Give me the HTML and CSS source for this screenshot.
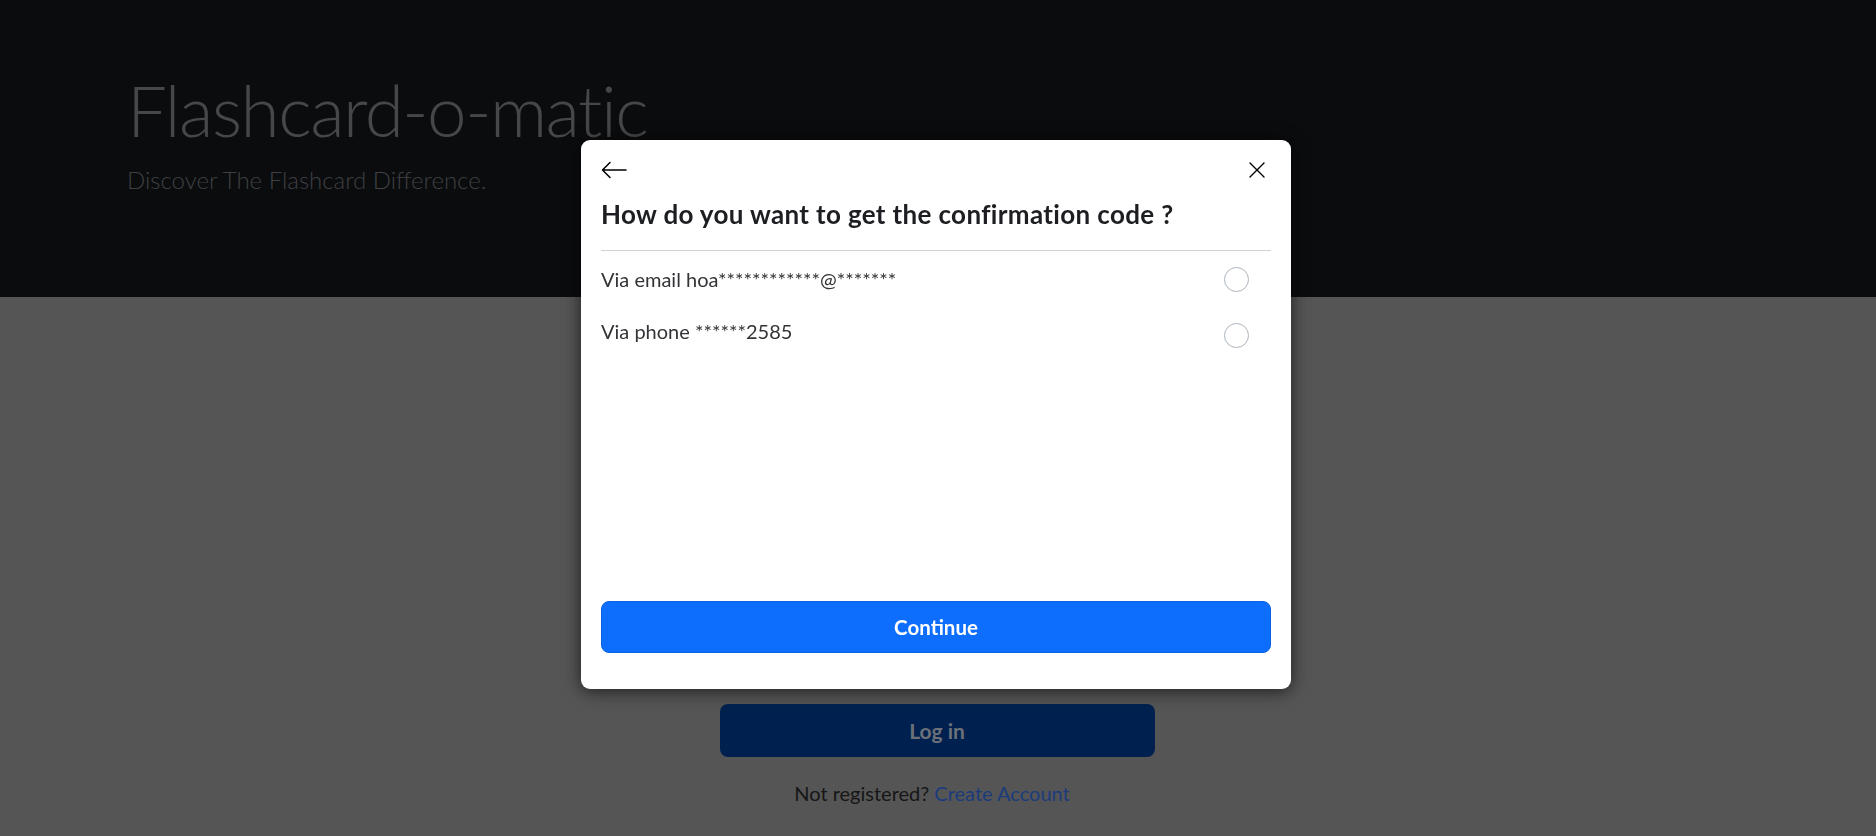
FILE: index.html
```html
<!DOCTYPE html>
<html lang="en">
<head>
<meta charset="utf-8">
<title>Flashcard-o-matic</title>
<link rel="stylesheet" href="styles.css">
</head>
<body>
<header class="hero">
  <h1 class="hero-title">Flashcard-o-matic</h1>
  <p class="hero-lead">Discover The Flashcard Difference.</p>
</header>
<main class="main">
  <form class="login">
    <button type="button" class="login-btn">Log in</button>
    <p class="register">Not registered? <a href="#" class="register-link">Create Account</a></p>
  </form>
</main>

<div class="overlay">
  <div class="modal">
    <div class="modal-top">
      <button type="button" class="icon-btn" aria-label="Back">
        <svg width="26" height="18" viewBox="0 0 26 18" fill="none" stroke="#000" stroke-width="1.5" stroke-linecap="round" stroke-linejoin="round"><path d="M25 9H1.5M9 1.5L1.5 9L9 16.5"/></svg>
      </button>
      <button type="button" class="icon-btn" aria-label="Close">
        <svg width="16" height="16" viewBox="0 0 16 16" fill="none" stroke="#000" stroke-width="1.4" stroke-linecap="round"><path d="M1 1L15 15M15 1L1 15"/></svg>
      </button>
    </div>
    <h2 class="modal-title">How do you want to get the confirmation code ?</h2>
    <div class="modal-body">
      <label class="option">
        <span class="option-text">Via email hoa************@*******</span>
        <span class="radio"></span>
      </label>
      <label class="option">
        <span class="option-text option-text-raised">Via phone ******2585</span>
        <span class="radio"></span>
      </label>
    </div>
    <div class="modal-footer">
      <button type="button" class="continue-btn">Continue</button>
    </div>
  </div>
</div>
</body>
</html>
```
FILE: styles.css
```css
* { box-sizing: border-box; }
html, body { margin: 0; padding: 0; }
body {
  font-family: "Lato", "Open Sans", "Liberation Sans", sans-serif;
  background: #555555;
  height: 836px;
  overflow: hidden;
}
.hero {
  background: #0b0c0e;
  height: 297px;
  padding: 67px 0 0 127px;
}
.hero-title {
  margin: 0;
  font-weight: 300;
  font-size: 71px;
  letter-spacing: -1.5px;
  line-height: 1.2;
  color: #46474a;
}
.hero-lead {
  margin: 11px 0 0;
  font-weight: 300;
  font-size: 24px;
  line-height: 1.45;
  color: #3f4043;
}
.main {
  padding-top: 407px;
}
.login {
  width: 435px;
  margin: 0 auto;
  transform: translateX(-1px);
}
.login-btn {
  display: block;
  width: 100%;
  height: 53px;
  border: none;
  border-radius: 8px;
  background: #00214f;
  color: #6c7179;
  font-family: inherit;
  font-weight: 700;
  font-size: 21px;
}
.register {
  margin: 21px 0 0;
  text-align: center;
  font-size: 20px;
  line-height: 1.5;
  color: #161617;
  transform: translateX(-5px);
}
.register-link {
  color: #1b3b7c;
  text-decoration: none;
}
.overlay {
  position: fixed;
  inset: 0;
  display: flex;
  justify-content: center;
  align-items: flex-start;
  padding: 140px 4px 0 0;
}
.modal {
  width: 710px;
  height: 549px;
  background: #fff;
  border-radius: 9px;
  box-shadow: 0 2px 18px rgba(0,0,0,0.65);
  padding: 18px 20px 36px;
  display: flex;
  flex-direction: column;
}
.modal-top {
  display: flex;
  justify-content: space-between;
  align-items: center;
  height: 24px;
}
.icon-btn {
  background: none;
  border: none;
  padding: 0;
  display: flex;
  align-items: center;
  cursor: pointer;
}
.icon-btn:last-child { margin-right: 6px; }
.modal-title {
  margin: 17px 0 0;
  padding-bottom: 20px;
  border-bottom: 1px solid #cfd1d4;
  font-size: 26px;
  letter-spacing: 0.35px;
  font-weight: 700;
  line-height: 1.2;
  color: #1c1e21;
}
.modal-body {
  flex: 1;
  display: flex;
  flex-direction: column;
  gap: 16px;
  padding-top: 8px;
}
.option {
  display: flex;
  justify-content: space-between;
  align-items: center;
  height: 40px;
  padding-right: 22px;
}
.option-text {
  font-size: 20px;
  line-height: 24px;
  color: #333437;
}
.option-text-raised {
  margin-bottom: 9px;
}
.radio {
  width: 25px;
  height: 25px;
  border: 1.6px solid #adb5bd;
  border-radius: 50%;
}
.continue-btn {
  display: block;
  width: 100%;
  height: 52px;
  border: 1px solid #0b63e0;
  border-radius: 8px;
  background: #0d6efd;
  color: #fff;
  font-family: inherit;
  font-weight: 700;
  font-size: 20.5px;
}
```
